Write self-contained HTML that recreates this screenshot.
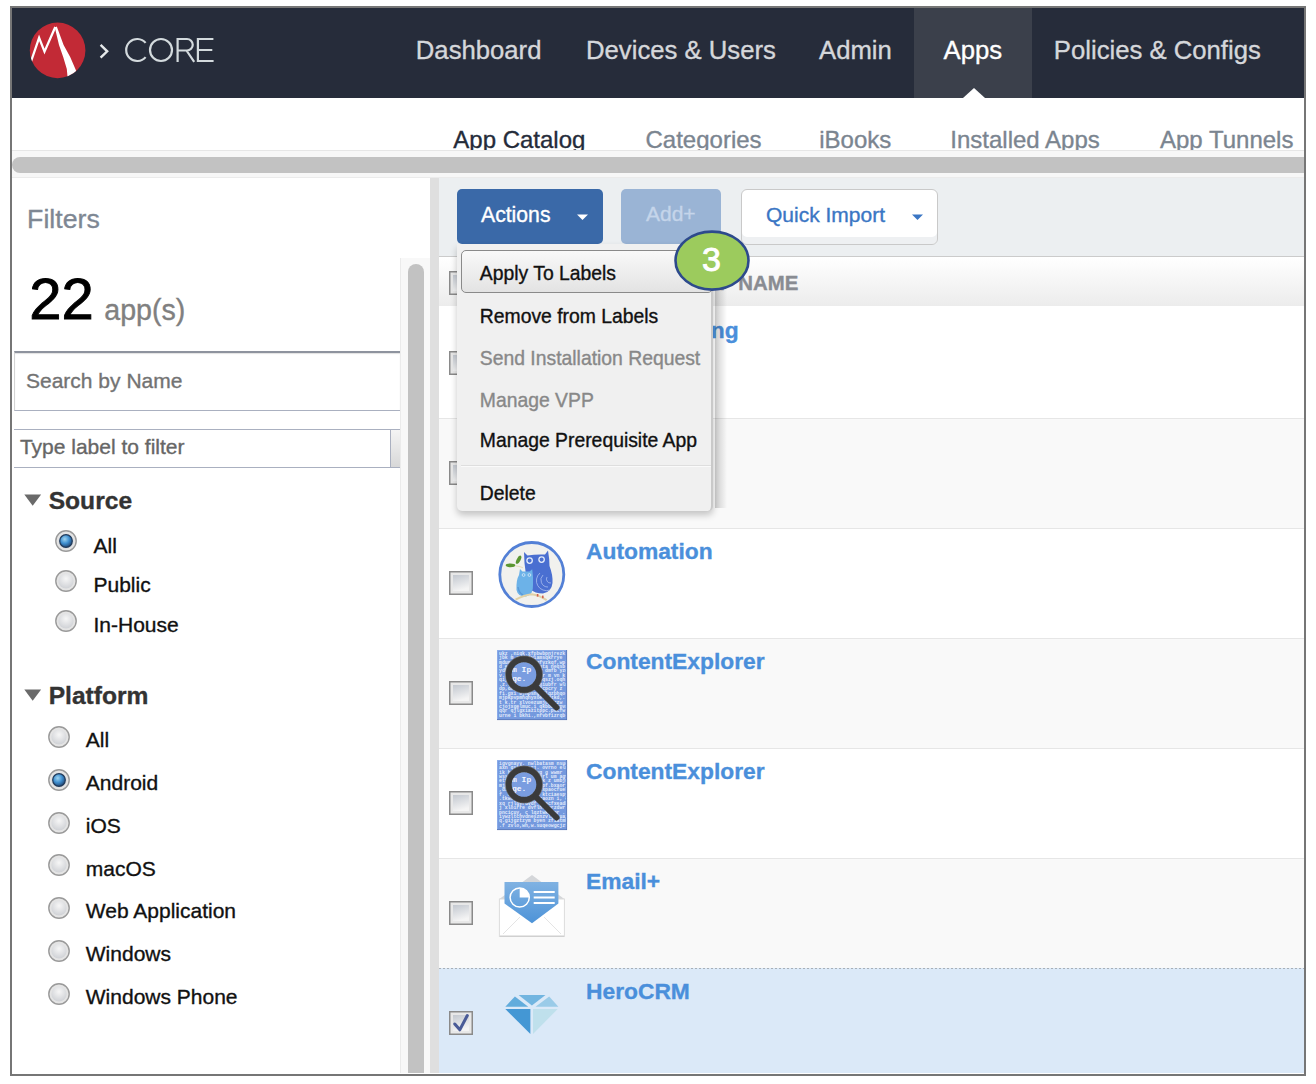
<!DOCTYPE html>
<html><head><meta charset="utf-8"><style>
html,body{margin:0;padding:0;background:#fff;width:1316px;height:1084px;overflow:hidden;position:relative;font-family:"Liberation Sans",sans-serif;}
.a{position:absolute;box-sizing:border-box;}
.t{position:absolute;white-space:nowrap;line-height:normal;-webkit-text-stroke:0.35px currentColor;}
svg{position:absolute;overflow:visible;}
</style></head><body>
<div class="a" style="left:10px;top:6px;width:1296px;height:1070px;border:2px solid #767676;background:#fff;"></div>
<div class="a" style="left:12px;top:8px;width:1292px;height:90px;background:#262c3a;"></div>
<div class="a" style="left:914px;top:8px;width:118px;height:90px;background:#3b404b;"></div>
<svg style="left:0;top:0" width="1316" height="1084"><polygon points="963,98 985,98 974,88" fill="#fff"/></svg>
<svg style="left:0;top:0" width="240" height="98">
<circle cx="57.6" cy="50.4" r="27.8" fill="#c22a36"/>
<clipPath id="lc"><circle cx="57.6" cy="50.4" r="27.8"/></clipPath>
<g clip-path="url(#lc)">
<polyline points="31,61.5 39.1,37.8 44.5,51.6 55.3,27" fill="none" stroke="#fff" stroke-width="2.3" stroke-linejoin="miter"/>
<polygon points="54.8,27.6 56.8,26.4 63.6,45 70.2,57 75.4,69 79,78 68,82 66.8,69 63.2,57 59,45" fill="#fff"/>
</g>
<polyline points="100.6,44.8 107.2,51.3 100.6,57.7" fill="none" stroke="#e6e9ea" stroke-width="2.4"/>
<g fill="none" stroke="#d3dadd" stroke-width="2.2">
<path d="M145.6,42.9 A11,11 0 1 0 145.6,57.1" />
<circle cx="161" cy="50" r="11"/>
<path d="M177.6,62 V39 H187 A5.75,5.75 0 0 1 187,50.5 H177.6 M186.5,50.5 L194.2,61.8"/>
<path d="M213.4,39 H197.9 V61 H213.6 M197.9,50 H212.3"/>
</g>
</svg>
<div class="t" style="left:415.8px;top:35.74px;font-size:25.7px;color:#d5d7da;">Dashboard</div>
<div class="t" style="left:586px;top:35.74px;font-size:25.7px;color:#d5d7da;">Devices &amp; Users</div>
<div class="t" style="left:819px;top:35.74px;font-size:25.7px;color:#d5d7da;">Admin</div>
<div class="t" style="left:943.6px;top:35.74px;font-size:25.7px;color:#fff;">Apps</div>
<div class="t" style="left:1053.8px;top:35.74px;font-size:25.7px;color:#d5d7da;">Policies &amp; Configs</div>
<div class="a" style="left:12px;top:98px;width:1292px;height:52px;overflow:hidden;">
<div class="t" style="left:441.3px;top:28.28px;font-size:24px;color:#252c3a;">App Catalog</div>
<div class="t" style="left:633.5px;top:28.28px;font-size:24px;color:#7b8590;">Categories</div>
<div class="t" style="left:807.2px;top:28.28px;font-size:24px;color:#7b8590;">iBooks</div>
<div class="t" style="left:938.3px;top:28.28px;font-size:24px;color:#7b8590;">Installed Apps</div>
<div class="t" style="left:1148px;top:28.28px;font-size:24px;color:#7b8590;">App Tunnels</div>
</div>
<div class="a" style="left:12px;top:150px;width:1292px;height:28px;background:#f7f7f7;border-top:1px solid #e6e6e6;border-bottom:1px solid #ebebeb;"></div>
<div class="a" style="left:12px;top:157px;width:1292px;height:16px;background:#c2c2c2;border-radius:8px 0 0 8px;"></div>
<div class="a" style="left:430px;top:178px;width:9px;height:895px;background:#dfdfdf;"></div>
<div class="a" style="left:439px;top:178px;width:865px;height:78px;background:#eceff1;"></div>
<div class="a" style="left:439px;top:256px;width:865px;height:1px;background:#cbcbcb;"></div>
<div class="a" style="left:400px;top:258px;width:30px;height:815px;background:#f8f8f8;border-left:1px solid #ebebeb;"></div>
<div class="a" style="left:408px;top:264px;width:16px;height:809px;background:#c2c2c2;border-radius:8px 8px 0 0;"></div>
<div class="t" style="left:27.1px;top:203.84px;font-size:26.7px;color:#7e8793;">Filters</div>
<div class="t" style="left:29.3px;top:265.01px;font-size:58px;color:#000;-webkit-text-stroke:0.9px #000;">22</div>
<div class="t" style="left:104.3px;top:293.62px;font-size:28.6px;color:#808080;">app(s)</div>
<div class="a" style="left:14px;top:351px;width:386px;height:60px;border-top:2px solid #8e939e;border-left:1px solid #d4d4d4;border-bottom:1px solid #aab0c0;background:#fff;box-shadow:inset 0 1px 1px rgba(0,0,0,0.12);"></div>
<div class="t" style="left:26px;top:369.00px;font-size:21px;color:#737373;">Search by Name</div>
<div class="a" style="left:14px;top:429px;width:386px;height:39px;border-top:1px solid #aab0c0;border-bottom:1px solid #aab0c0;background:#fff;"></div>
<div class="a" style="left:390px;top:430px;width:10px;height:37px;border-left:1px solid #aab0c0;background:linear-gradient(#f4f4f4,#d8d8d8);"></div>
<div class="t" style="left:19.9px;top:435.00px;font-size:21px;color:#666;">Type label to filter</div>
<svg style="left:0;top:0" width="430" height="1084"><polygon points="24.3,494.5 41.1,494.5 32.7,505.7" fill="#6a6a6a"/><polygon points="24.3,689.5 41.1,689.5 32.7,700.7" fill="#6a6a6a"/></svg>
<div class="t" style="left:48.7px;top:487.44px;font-size:24.6px;color:#333;font-weight:bold;">Source</div>
<div class="t" style="left:48.7px;top:681.74px;font-size:24.6px;color:#333;font-weight:bold;">Platform</div>
<svg style="left:54.099999999999994px;top:529.4px" width="24" height="24"><defs><radialGradient id="rg" cx="50%" cy="35%" r="60%"><stop offset="0" stop-color="#f6f6f6"/><stop offset="1" stop-color="#d2d4d8"/></radialGradient><radialGradient id="bg" cx="40%" cy="35%" r="70%"><stop offset="0" stop-color="#9fd4f0"/><stop offset="0.5" stop-color="#3f8fd0"/><stop offset="1" stop-color="#1f3f6a"/></radialGradient></defs><circle cx="12" cy="12" r="10.2" fill="#e4e4e4" stroke="#9a9a9a" stroke-width="1.4"/><circle cx="12" cy="12" r="7.6" fill="url(#rg)"/><circle cx="12" cy="12" r="6.3" fill="url(#bg)" stroke="#203a5a" stroke-width="1.2"/></svg>
<div class="t" style="left:93.5px;top:533.60px;font-size:21px;color:#111;">All</div>
<svg style="left:54.099999999999994px;top:569.1999999999999px" width="24" height="24"><defs><radialGradient id="rg" cx="50%" cy="35%" r="60%"><stop offset="0" stop-color="#f6f6f6"/><stop offset="1" stop-color="#d2d4d8"/></radialGradient><radialGradient id="bg" cx="40%" cy="35%" r="70%"><stop offset="0" stop-color="#9fd4f0"/><stop offset="0.5" stop-color="#3f8fd0"/><stop offset="1" stop-color="#1f3f6a"/></radialGradient></defs><circle cx="12" cy="12" r="10.2" fill="#e4e4e4" stroke="#9a9a9a" stroke-width="1.4"/><circle cx="12" cy="12" r="7.6" fill="url(#rg)"/></svg>
<div class="t" style="left:93.5px;top:573.10px;font-size:21px;color:#111;">Public</div>
<svg style="left:54.099999999999994px;top:609.0px" width="24" height="24"><defs><radialGradient id="rg" cx="50%" cy="35%" r="60%"><stop offset="0" stop-color="#f6f6f6"/><stop offset="1" stop-color="#d2d4d8"/></radialGradient><radialGradient id="bg" cx="40%" cy="35%" r="70%"><stop offset="0" stop-color="#9fd4f0"/><stop offset="0.5" stop-color="#3f8fd0"/><stop offset="1" stop-color="#1f3f6a"/></radialGradient></defs><circle cx="12" cy="12" r="10.2" fill="#e4e4e4" stroke="#9a9a9a" stroke-width="1.4"/><circle cx="12" cy="12" r="7.6" fill="url(#rg)"/></svg>
<div class="t" style="left:93.5px;top:612.60px;font-size:21px;color:#111;">In-House</div>
<svg style="left:47.3px;top:725.0px" width="24" height="24"><defs><radialGradient id="rg" cx="50%" cy="35%" r="60%"><stop offset="0" stop-color="#f6f6f6"/><stop offset="1" stop-color="#d2d4d8"/></radialGradient><radialGradient id="bg" cx="40%" cy="35%" r="70%"><stop offset="0" stop-color="#9fd4f0"/><stop offset="0.5" stop-color="#3f8fd0"/><stop offset="1" stop-color="#1f3f6a"/></radialGradient></defs><circle cx="12" cy="12" r="10.2" fill="#e4e4e4" stroke="#9a9a9a" stroke-width="1.4"/><circle cx="12" cy="12" r="7.6" fill="url(#rg)"/></svg>
<div class="t" style="left:85.8px;top:728.20px;font-size:21px;color:#111;">All</div>
<svg style="left:47.3px;top:767.8px" width="24" height="24"><defs><radialGradient id="rg" cx="50%" cy="35%" r="60%"><stop offset="0" stop-color="#f6f6f6"/><stop offset="1" stop-color="#d2d4d8"/></radialGradient><radialGradient id="bg" cx="40%" cy="35%" r="70%"><stop offset="0" stop-color="#9fd4f0"/><stop offset="0.5" stop-color="#3f8fd0"/><stop offset="1" stop-color="#1f3f6a"/></radialGradient></defs><circle cx="12" cy="12" r="10.2" fill="#e4e4e4" stroke="#9a9a9a" stroke-width="1.4"/><circle cx="12" cy="12" r="7.6" fill="url(#rg)"/><circle cx="12" cy="12" r="6.3" fill="url(#bg)" stroke="#203a5a" stroke-width="1.2"/></svg>
<div class="t" style="left:85.8px;top:771.00px;font-size:21px;color:#111;">Android</div>
<svg style="left:47.3px;top:810.6px" width="24" height="24"><defs><radialGradient id="rg" cx="50%" cy="35%" r="60%"><stop offset="0" stop-color="#f6f6f6"/><stop offset="1" stop-color="#d2d4d8"/></radialGradient><radialGradient id="bg" cx="40%" cy="35%" r="70%"><stop offset="0" stop-color="#9fd4f0"/><stop offset="0.5" stop-color="#3f8fd0"/><stop offset="1" stop-color="#1f3f6a"/></radialGradient></defs><circle cx="12" cy="12" r="10.2" fill="#e4e4e4" stroke="#9a9a9a" stroke-width="1.4"/><circle cx="12" cy="12" r="7.6" fill="url(#rg)"/></svg>
<div class="t" style="left:85.8px;top:813.80px;font-size:21px;color:#111;">iOS</div>
<svg style="left:47.3px;top:853.4px" width="24" height="24"><defs><radialGradient id="rg" cx="50%" cy="35%" r="60%"><stop offset="0" stop-color="#f6f6f6"/><stop offset="1" stop-color="#d2d4d8"/></radialGradient><radialGradient id="bg" cx="40%" cy="35%" r="70%"><stop offset="0" stop-color="#9fd4f0"/><stop offset="0.5" stop-color="#3f8fd0"/><stop offset="1" stop-color="#1f3f6a"/></radialGradient></defs><circle cx="12" cy="12" r="10.2" fill="#e4e4e4" stroke="#9a9a9a" stroke-width="1.4"/><circle cx="12" cy="12" r="7.6" fill="url(#rg)"/></svg>
<div class="t" style="left:85.8px;top:856.60px;font-size:21px;color:#111;">macOS</div>
<svg style="left:47.3px;top:896.2px" width="24" height="24"><defs><radialGradient id="rg" cx="50%" cy="35%" r="60%"><stop offset="0" stop-color="#f6f6f6"/><stop offset="1" stop-color="#d2d4d8"/></radialGradient><radialGradient id="bg" cx="40%" cy="35%" r="70%"><stop offset="0" stop-color="#9fd4f0"/><stop offset="0.5" stop-color="#3f8fd0"/><stop offset="1" stop-color="#1f3f6a"/></radialGradient></defs><circle cx="12" cy="12" r="10.2" fill="#e4e4e4" stroke="#9a9a9a" stroke-width="1.4"/><circle cx="12" cy="12" r="7.6" fill="url(#rg)"/></svg>
<div class="t" style="left:85.8px;top:899.40px;font-size:21px;color:#111;">Web Application</div>
<svg style="left:47.3px;top:939.0px" width="24" height="24"><defs><radialGradient id="rg" cx="50%" cy="35%" r="60%"><stop offset="0" stop-color="#f6f6f6"/><stop offset="1" stop-color="#d2d4d8"/></radialGradient><radialGradient id="bg" cx="40%" cy="35%" r="70%"><stop offset="0" stop-color="#9fd4f0"/><stop offset="0.5" stop-color="#3f8fd0"/><stop offset="1" stop-color="#1f3f6a"/></radialGradient></defs><circle cx="12" cy="12" r="10.2" fill="#e4e4e4" stroke="#9a9a9a" stroke-width="1.4"/><circle cx="12" cy="12" r="7.6" fill="url(#rg)"/></svg>
<div class="t" style="left:85.8px;top:942.20px;font-size:21px;color:#111;">Windows</div>
<svg style="left:47.3px;top:981.8px" width="24" height="24"><defs><radialGradient id="rg" cx="50%" cy="35%" r="60%"><stop offset="0" stop-color="#f6f6f6"/><stop offset="1" stop-color="#d2d4d8"/></radialGradient><radialGradient id="bg" cx="40%" cy="35%" r="70%"><stop offset="0" stop-color="#9fd4f0"/><stop offset="0.5" stop-color="#3f8fd0"/><stop offset="1" stop-color="#1f3f6a"/></radialGradient></defs><circle cx="12" cy="12" r="10.2" fill="#e4e4e4" stroke="#9a9a9a" stroke-width="1.4"/><circle cx="12" cy="12" r="7.6" fill="url(#rg)"/></svg>
<div class="t" style="left:85.8px;top:985.00px;font-size:21px;color:#111;">Windows Phone</div>
<div class="a" style="left:439px;top:257px;width:865px;height:49px;background:linear-gradient(#ffffff,#ececec);"></div>
<div class="a" style="left:439px;top:306px;width:865px;height:112px;background:#fff;"></div>
<div class="a" style="left:439px;top:418px;width:865px;height:110px;background:#f9f9f9;"></div>
<div class="a" style="left:439px;top:418px;width:865px;height:1px;background:#e6e6e6;"></div>
<div class="a" style="left:439px;top:528px;width:865px;height:110px;background:#fff;"></div>
<div class="a" style="left:439px;top:528px;width:865px;height:1px;background:#e6e6e6;"></div>
<div class="a" style="left:439px;top:638px;width:865px;height:110px;background:#f9f9f9;"></div>
<div class="a" style="left:439px;top:638px;width:865px;height:1px;background:#e6e6e6;"></div>
<div class="a" style="left:439px;top:748px;width:865px;height:110px;background:#fff;"></div>
<div class="a" style="left:439px;top:748px;width:865px;height:1px;background:#e6e6e6;"></div>
<div class="a" style="left:439px;top:858px;width:865px;height:110px;background:#f9f9f9;"></div>
<div class="a" style="left:439px;top:858px;width:865px;height:1px;background:#e6e6e6;"></div>
<div class="a" style="left:439px;top:968px;width:865px;height:105px;background:#dbe9f8;"></div>
<div class="a" style="left:439px;top:968px;width:865px;height:1px;background:repeating-linear-gradient(90deg,#a8b0b8 0 2px,transparent 2px 4px);"></div>
<svg style="left:449px;top:271px" width="24" height="24"><defs><linearGradient id="cg" x1="0" y1="0" x2="0.3" y2="1"><stop offset="0" stop-color="#c3c8d0"/><stop offset="1" stop-color="#f4f4f4"/></linearGradient></defs><rect x="0.75" y="0.75" width="22.5" height="22.5" fill="#e8e8e8" stroke="#8a8a8a" stroke-width="1.5"/><rect x="4" y="4" width="16" height="16" fill="url(#cg)"/></svg>
<svg style="left:449px;top:351px" width="24" height="24"><defs><linearGradient id="cg" x1="0" y1="0" x2="0.3" y2="1"><stop offset="0" stop-color="#c3c8d0"/><stop offset="1" stop-color="#f4f4f4"/></linearGradient></defs><rect x="0.75" y="0.75" width="22.5" height="22.5" fill="#e8e8e8" stroke="#8a8a8a" stroke-width="1.5"/><rect x="4" y="4" width="16" height="16" fill="url(#cg)"/></svg>
<svg style="left:449px;top:461px" width="24" height="24"><defs><linearGradient id="cg" x1="0" y1="0" x2="0.3" y2="1"><stop offset="0" stop-color="#c3c8d0"/><stop offset="1" stop-color="#f4f4f4"/></linearGradient></defs><rect x="0.75" y="0.75" width="22.5" height="22.5" fill="#e8e8e8" stroke="#8a8a8a" stroke-width="1.5"/><rect x="4" y="4" width="16" height="16" fill="url(#cg)"/></svg>
<svg style="left:449px;top:571px" width="24" height="24"><defs><linearGradient id="cg" x1="0" y1="0" x2="0.3" y2="1"><stop offset="0" stop-color="#c3c8d0"/><stop offset="1" stop-color="#f4f4f4"/></linearGradient></defs><rect x="0.75" y="0.75" width="22.5" height="22.5" fill="#e8e8e8" stroke="#8a8a8a" stroke-width="1.5"/><rect x="4" y="4" width="16" height="16" fill="url(#cg)"/></svg>
<svg style="left:449px;top:681px" width="24" height="24"><defs><linearGradient id="cg" x1="0" y1="0" x2="0.3" y2="1"><stop offset="0" stop-color="#c3c8d0"/><stop offset="1" stop-color="#f4f4f4"/></linearGradient></defs><rect x="0.75" y="0.75" width="22.5" height="22.5" fill="#e8e8e8" stroke="#8a8a8a" stroke-width="1.5"/><rect x="4" y="4" width="16" height="16" fill="url(#cg)"/></svg>
<svg style="left:449px;top:791px" width="24" height="24"><defs><linearGradient id="cg" x1="0" y1="0" x2="0.3" y2="1"><stop offset="0" stop-color="#c3c8d0"/><stop offset="1" stop-color="#f4f4f4"/></linearGradient></defs><rect x="0.75" y="0.75" width="22.5" height="22.5" fill="#e8e8e8" stroke="#8a8a8a" stroke-width="1.5"/><rect x="4" y="4" width="16" height="16" fill="url(#cg)"/></svg>
<svg style="left:449px;top:901px" width="24" height="24"><defs><linearGradient id="cg" x1="0" y1="0" x2="0.3" y2="1"><stop offset="0" stop-color="#c3c8d0"/><stop offset="1" stop-color="#f4f4f4"/></linearGradient></defs><rect x="0.75" y="0.75" width="22.5" height="22.5" fill="#e8e8e8" stroke="#8a8a8a" stroke-width="1.5"/><rect x="4" y="4" width="16" height="16" fill="url(#cg)"/></svg>
<svg style="left:449px;top:1011px" width="24" height="24"><defs><linearGradient id="cg" x1="0" y1="0" x2="0.3" y2="1"><stop offset="0" stop-color="#c3c8d0"/><stop offset="1" stop-color="#f4f4f4"/></linearGradient></defs><rect x="0.75" y="0.75" width="22.5" height="22.5" fill="#e8e8e8" stroke="#8a8a8a" stroke-width="1.5"/><rect x="4" y="4" width="16" height="16" fill="url(#cg)"/><path d="M5.8,13 L10.8,18.8 L18.3,4.5" fill="none" stroke="#4a5b97" stroke-width="3" stroke-linecap="round" stroke-linejoin="round"/></svg>
<div class="t" style="left:691px;top:272.04px;font-size:20.4px;color:#898c92;font-weight:bold;">APP NAME</div>
<div class="t" style="left:517.4000000000001px;top:317.17px;font-size:22.8px;color:#4a8fdb;font-weight:bold;">AppConnect Testing</div>
<div class="t" style="left:586px;top:428.37px;font-size:22.8px;color:#4a8fdb;font-weight:bold;">Docs</div>
<div class="t" style="left:586px;top:538.37px;font-size:22.8px;color:#4a8fdb;font-weight:bold;">Automation</div>
<div class="t" style="left:586px;top:648.37px;font-size:22.8px;color:#4a8fdb;font-weight:bold;">ContentExplorer</div>
<div class="t" style="left:586px;top:758.37px;font-size:22.8px;color:#4a8fdb;font-weight:bold;">ContentExplorer</div>
<div class="t" style="left:586px;top:868.37px;font-size:22.8px;color:#4a8fdb;font-weight:bold;">Email+</div>
<div class="t" style="left:586px;top:978.37px;font-size:22.8px;color:#4a8fdb;font-weight:bold;">HeroCRM</div>
<svg style="left:492px;top:535px" width="80" height="80">
<circle cx="39.8" cy="39.5" r="32" fill="#f1f1ee" stroke="#5380d6" stroke-width="2.8"/>
<path d="M23.5,30.8 Q28,31 31,32.8" fill="none" stroke="#e6dcc0" stroke-width="1.2"/>
<ellipse cx="18.5" cy="30.3" rx="4.8" ry="1.9" fill="#5b9632"/>
<ellipse cx="26.6" cy="24.8" rx="4.6" ry="1.9" transform="rotate(-62 26.6 24.8)" fill="#5b9632"/>
<path d="M32,17 L35.5,20.5 Q44,19 53,19.5 L56,15.5 Q57.5,24 57.5,31 Q61,40 60.5,48 Q59.5,57 51,58.5 Q43,58.5 38,54 L34,40 Q32,28 32,17 Z" fill="#4a6fd1"/>
<circle cx="37.6" cy="25.6" r="2.7" fill="#4a6fd1" stroke="#e4ecfa" stroke-width="1.3"/>
<circle cx="49.6" cy="24.6" r="2.7" fill="#4a6fd1" stroke="#e4ecfa" stroke-width="1.3"/>
<g fill="none" stroke="#b8c8f0" stroke-width="0.7"><path d="M56,52 A7,7 0 0 1 51,40"/><path d="M58,55 A10,10 0 0 1 48,38"/><path d="M59,48 A4,4 0 0 1 55,42"/></g>
<path d="M28,34 L30.5,36.5 L37.5,36.5 L40.2,34.3 Q41.5,42 41,50 Q41.5,60 34,61.5 Q26,62 24.5,55 Q24,45 27,40 Z" fill="#6cb2e8"/>
<path d="M26,52 Q27,58 31,60" fill="none" stroke="#5a9ad8" stroke-width="1.5"/>
<circle cx="31.6" cy="40" r="1.4" fill="none" stroke="#d8eaf8" stroke-width="0.8"/><circle cx="37.4" cy="40" r="1.4" fill="none" stroke="#d8eaf8" stroke-width="0.8"/>
<path d="M23.6,64.6 Q32,60 39.9,59.2 Q47,60 54.6,65.2" fill="none" stroke="#e0d2a8" stroke-width="2"/>
<rect x="44.8" y="59" width="1.6" height="2.6" fill="#d06050"/><rect x="50" y="60.6" width="1.6" height="2.6" fill="#d06050"/>
</svg>
<svg style="left:497px;top:650px" width="72" height="72">
<rect x="0" y="0" width="70" height="70" fill="#7499de"/>
<text x="2" y="4.60" font-family="Liberation Mono" font-size="4.8" font-weight="bold" fill="#f2f6ff" fill-opacity="0.9">ukz  ,niqk.xfpbwbpnjrezk</text><text x="2" y="9.05" font-family="Liberation Mono" font-size="4.8" font-weight="bold" fill="#f2f6ff" fill-opacity="0.9">jbk  m  zudofviamsqkrrye</text><text x="2" y="13.50" font-family="Liberation Mono" font-size="4.8" font-weight="bold" fill="#f2f6ff" fill-opacity="0.9">mdum pnntoavwqfvzkqf,wpl</text><text x="2" y="17.95" font-family="Liberation Mono" font-size="4.8" font-weight="bold" fill="#f2f6ff" fill-opacity="0.9">d exxfxnotdrb.uta  neqsb</text><text x="2" y="22.40" font-family="Liberation Mono" font-size="4.8" font-weight="bold" fill="#f2f6ff" fill-opacity="0.9">ydkm fna pbn tw dmfb yzd</text><text x="2" y="26.85" font-family="Liberation Mono" font-size="4.8" font-weight="bold" fill="#f2f6ff" fill-opacity="0.9">v.ppb,mu cccbs r  m vn k</text><text x="2" y="31.30" font-family="Liberation Mono" font-size="4.8" font-weight="bold" fill="#f2f6ff" fill-opacity="0.9">qijgtdbxcbt ntoqszj.oqh.</text><text x="2" y="35.75" font-family="Liberation Mono" font-size="4.8" font-weight="bold" fill="#f2f6ff" fill-opacity="0.9">.z.fnzxzdb,etlhiubfr wlu</text><text x="2" y="40.20" font-family="Liberation Mono" font-size="4.8" font-weight="bold" fill="#f2f6ff" fill-opacity="0.9">dp,dkynyz  hymifcpcry z </text><text x="2" y="44.65" font-family="Liberation Mono" font-size="4.8" font-weight="bold" fill="#f2f6ff" fill-opacity="0.9"> fi.gxi bjnpsng dlqzbhqo</text><text x="2" y="49.10" font-family="Liberation Mono" font-size="4.8" font-weight="bold" fill="#f2f6ff" fill-opacity="0.9">mjpkpvpmnqhyxoesxnzkd,. </text><text x="2" y="53.55" font-family="Liberation Mono" font-size="4.8" font-weight="bold" fill="#f2f6ff" fill-opacity="0.9">t  k.tr  xlvoezumjofdczw</text><text x="2" y="58.00" font-family="Liberation Mono" font-size="4.8" font-weight="bold" fill="#f2f6ff" fill-opacity="0.9">cjojxgelmuc,i qkbbb ypva</text><text x="2" y="62.45" font-family="Liberation Mono" font-size="4.8" font-weight="bold" fill="#f2f6ff" fill-opacity="0.9"> qqr qjlgxiazitppc.pdcfw</text><text x="2" y="66.90" font-family="Liberation Mono" font-size="4.8" font-weight="bold" fill="#f2f6ff" fill-opacity="0.9">urne i  bkhi.,nfvbfizrqb</text>
<rect x="0.4" y="0.4" width="69.2" height="69.2" fill="none" stroke="#8fb0ec" stroke-width="0.8"/>
<line x1="0" y1="69.6" x2="70" y2="69.6" stroke="#4f6fb0" stroke-width="0.8"/>
<line x1="69.6" y1="0" x2="69.6" y2="70" stroke="#4f6fb0" stroke-width="0.8"/>
<circle cx="27" cy="24.5" r="12.3" fill="#7a9de0"/>
<text x="15" y="22" font-family="Liberation Mono" font-size="8" font-weight="bold" fill="#f4f7ff">m Ip</text>
<text x="15" y="30.5" font-family="Liberation Mono" font-size="8" font-weight="bold" fill="#f4f7ff">ge.</text>
<circle cx="27" cy="24.5" r="15.5" fill="none" stroke="#3b3b3b" stroke-width="6.4"/>
<circle cx="27" cy="24.5" r="18.6" fill="none" stroke="#9a9a9a" stroke-width="0.6" stroke-opacity="0.6"/>
<line x1="39" y1="37" x2="59.5" y2="57.5" stroke="#3a3a3a" stroke-width="6" stroke-linecap="round"/>
</svg>
<svg style="left:497px;top:760px" width="72" height="72">
<rect x="0" y="0" width="70" height="70" fill="#7499de"/>
<text x="2" y="4.60" font-family="Liberation Mono" font-size="4.8" font-weight="bold" fill="#f2f6ff" fill-opacity="0.9">igvgnayv. nwlbatasm nsud</text><text x="2" y="9.05" font-family="Liberation Mono" font-size="4.8" font-weight="bold" fill="#f2f6ff" fill-opacity="0.9">axn qsifrzsrj. ovrno eln</text><text x="2" y="13.50" font-family="Liberation Mono" font-size="4.8" font-weight="bold" fill="#f2f6ff" fill-opacity="0.9">ik hsjkunx  btyq  g wwmr</text><text x="2" y="17.95" font-family="Liberation Mono" font-size="4.8" font-weight="bold" fill="#f2f6ff" fill-opacity="0.9">wsseormjgjtwomhrl um agv</text><text x="2" y="22.40" font-family="Liberation Mono" font-size="4.8" font-weight="bold" fill="#f2f6ff" fill-opacity="0.9">etfpswyuqevm krk z umbju</text><text x="2" y="26.85" font-family="Liberation Mono" font-size="4.8" font-weight="bold" fill="#f2f6ff" fill-opacity="0.9">mjpglgaunp oxkwpf.bxaorj</text><text x="2" y="31.30" font-family="Liberation Mono" font-size="4.8" font-weight="bold" fill="#f2f6ff" fill-opacity="0.9">,dihz ,rcp.fhoyxpaocfues</text><text x="2" y="35.75" font-family="Liberation Mono" font-size="4.8" font-weight="bold" fill="#f2f6ff" fill-opacity="0.9">f. myybve,sgtn ktciaespy</text><text x="2" y="40.20" font-family="Liberation Mono" font-size="4.8" font-weight="bold" fill="#f2f6ff" fill-opacity="0.9">.tkwt psdqsriecaozn i, c</text><text x="2" y="44.65" font-family="Liberation Mono" font-size="4.8" font-weight="bold" fill="#f2f6ff" fill-opacity="0.9">xq rjlgyrdvdf g ecfxeadb</text><text x="2" y="49.10" font-family="Liberation Mono" font-size="4.8" font-weight="bold" fill="#f2f6ff" fill-opacity="0.9">j  xloirre dvflnfwprzdwr</text><text x="2" y="53.55" font-family="Liberation Mono" font-size="4.8" font-weight="bold" fill="#f2f6ff" fill-opacity="0.9">pncicuy, c lqztwkgfnr . </text><text x="2" y="58.00" font-family="Liberation Mono" font-size="4.8" font-weight="bold" fill="#f2f6ff" fill-opacity="0.9">iywzltchvdnesznzvloj uai</text><text x="2" y="62.45" font-family="Liberation Mono" font-size="4.8" font-weight="bold" fill="#f2f6ff" fill-opacity="0.9">q.gijgztzym byen zfiatmh</text><text x="2" y="66.90" font-family="Liberation Mono" font-size="4.8" font-weight="bold" fill="#f2f6ff" fill-opacity="0.9">.f zvlo,wh,w.suqeowgcjzt</text>
<rect x="0.4" y="0.4" width="69.2" height="69.2" fill="none" stroke="#8fb0ec" stroke-width="0.8"/>
<line x1="0" y1="69.6" x2="70" y2="69.6" stroke="#4f6fb0" stroke-width="0.8"/>
<line x1="69.6" y1="0" x2="69.6" y2="70" stroke="#4f6fb0" stroke-width="0.8"/>
<circle cx="27" cy="24.5" r="12.3" fill="#7a9de0"/>
<text x="15" y="22" font-family="Liberation Mono" font-size="8" font-weight="bold" fill="#f4f7ff">m Ip</text>
<text x="15" y="30.5" font-family="Liberation Mono" font-size="8" font-weight="bold" fill="#f4f7ff">ge.</text>
<circle cx="27" cy="24.5" r="15.5" fill="none" stroke="#3b3b3b" stroke-width="6.4"/>
<circle cx="27" cy="24.5" r="18.6" fill="none" stroke="#9a9a9a" stroke-width="0.6" stroke-opacity="0.6"/>
<line x1="39" y1="37" x2="59.5" y2="57.5" stroke="#3a3a3a" stroke-width="6" stroke-linecap="round"/>
</svg>
<svg style="left:492px;top:865px" width="80" height="80">
<defs><linearGradient id="eg" x1="0" y1="0" x2="0" y2="1"><stop offset="0" stop-color="#80b2e2"/><stop offset="1" stop-color="#4d93d8"/></linearGradient></defs>
<polygon points="40,10 72.3,34 72.3,40 7.4,40 7.4,34" fill="#d4d6d9"/>
<rect x="7.4" y="34" width="65" height="37.5" fill="#fff" stroke="#dcdcdc" stroke-width="1"/>
<rect x="8" y="70.5" width="64" height="1.5" fill="#d0d0d0"/>
<line x1="11" y1="69" x2="28" y2="52" stroke="#e4e4e4" stroke-width="1"/><line x1="69" y1="69" x2="52" y2="52" stroke="#e4e4e4" stroke-width="1"/>
<polygon points="12.5,17 66.4,17 66.4,38.4 40,58.3 12.5,38.4" fill="url(#eg)"/>
<circle cx="27.7" cy="32.5" r="9.6" fill="none" stroke="#fff" stroke-width="1.5"/>
<path d="M27.7,22.9 V32.5 H37.3 A9.6,9.6 0 0 0 27.7,22.9 Z" fill="#fff"/>
<rect x="41.7" y="26" width="21" height="2" fill="#fff"/><rect x="41.7" y="31.5" width="21" height="2" fill="#fff"/><rect x="41.7" y="37" width="21" height="2" fill="#fff"/>
</svg>
<svg style="left:492px;top:975px" width="80" height="80">
<polygon points="26.6,19.9 53.5,19.9 39.9,30.6" fill="#72b5e0"/>
<polygon points="22.9,21.4 36.2,31.7 13.3,31.7" fill="#62acdc"/>
<polygon points="57.2,21.4 66.4,31.7 43.5,31.7" fill="#9acbe8"/>
<polygon points="13.3,34 38.4,34 38.4,59" fill="#4497d4"/>
<polygon points="41,34 65.7,34 41,59" fill="#bfe0ec"/>
</svg>
<div class="a" style="left:457px;top:189px;width:146px;height:55px;background:#3a69a8;border-radius:5px;"></div>
<div class="t" style="left:481px;top:203.31px;font-size:21.2px;color:#fff;">Actions</div>
<div class="a" style="left:621px;top:189px;width:100px;height:55px;background:#9ab4d5;border-radius:5px;"></div>
<div class="t" style="left:646px;top:202.30px;font-size:21px;color:#c5d5ea;">Add+</div>
<div class="a" style="left:741px;top:189px;width:197px;height:56px;background:#fff;border:1px solid #c9c9c9;border-radius:6px;box-shadow:inset 0 -7px 0 #eef0f2;"></div>
<div class="t" style="left:766px;top:203.00px;font-size:21px;color:#3a76c4;">Quick Import</div>
<svg style="left:0;top:0" width="1316" height="300"><polygon points="577,214.5 588,214.5 582.5,220" fill="#fff"/><polygon points="912,214.5 923,214.5 917.5,220" fill="#3a76c4"/></svg>
<div class="a" style="left:457px;top:244px;width:256px;height:267px;background:#f0f0f0;border-right:2px solid #c9c9c9;border-radius:0 0 5px 5px;box-shadow:0 4px 7px rgba(0,0,0,0.22);"></div>
<div class="a" style="left:715px;top:250px;width:12px;height:258px;background:linear-gradient(to right,rgba(0,0,0,0.19),rgba(0,0,0,0));"></div>
<div class="a" style="left:461px;top:250px;width:252px;height:43px;background:linear-gradient(#f9f9f9,#e3e3e3);border:1px solid #8a8a8a;border-radius:5px;"></div>
<div class="t" style="left:479.8px;top:261.99px;font-size:19.35px;color:#111;">Apply To Labels</div>
<div class="t" style="left:479.8px;top:305.19px;font-size:19.35px;color:#111;">Remove from Labels</div>
<div class="t" style="left:479.8px;top:346.79px;font-size:19.35px;color:#888;">Send Installation Request</div>
<div class="t" style="left:479.8px;top:389.29px;font-size:19.35px;color:#888;">Manage VPP</div>
<div class="t" style="left:479.8px;top:429.19px;font-size:19.35px;color:#111;">Manage Prerequisite App</div>
<div class="a" style="left:461px;top:465px;width:250px;height:1px;background:#dedede;"></div>
<div class="a" style="left:461px;top:466px;width:250px;height:1px;background:#fafafa;"></div>
<div class="t" style="left:479.8px;top:482.19px;font-size:19.35px;color:#111;">Delete</div>
<svg style="left:0;top:0" width="1316" height="400"><ellipse cx="712" cy="260.6" rx="36.5" ry="29" fill="#9ccb5d" stroke="#2d4a8c" stroke-width="2.6"/></svg>
<div class="t" style="left:702px;top:240.23px;font-size:34px;color:#fff;-webkit-text-stroke:0.9px #fff;">3</div>
</body></html>
